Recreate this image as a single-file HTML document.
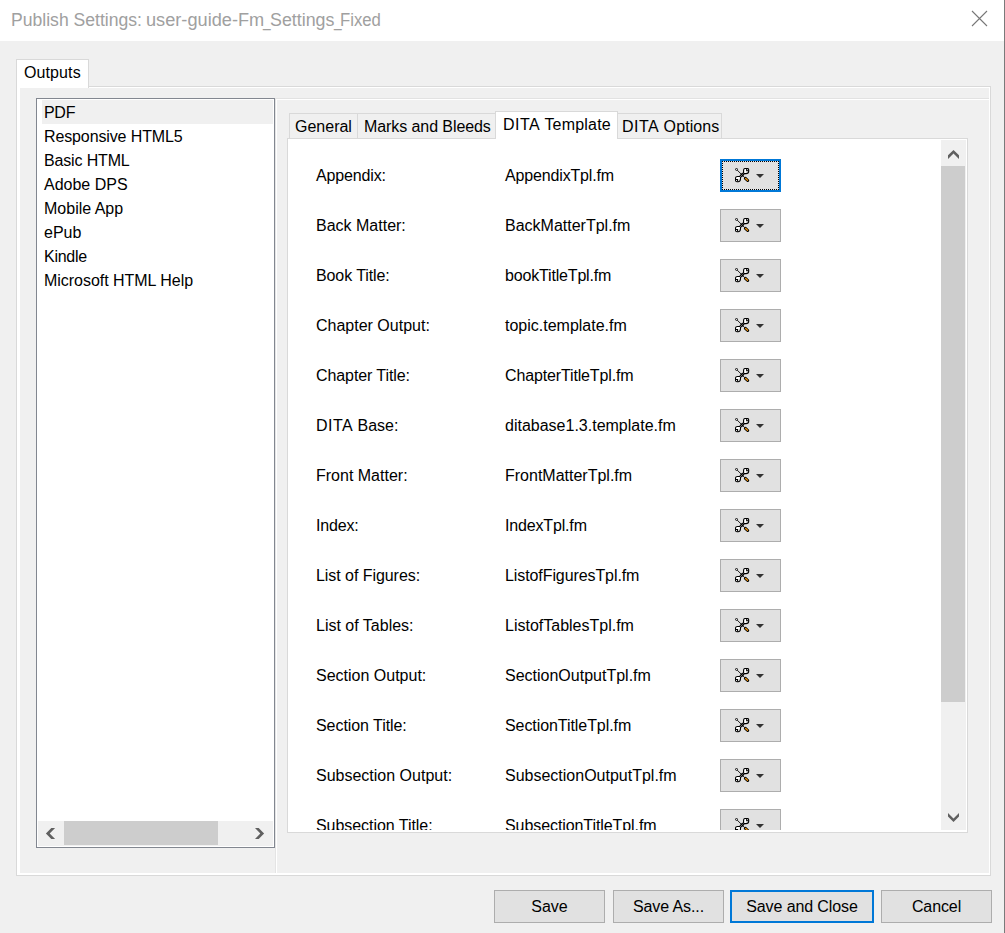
<!DOCTYPE html>
<html><head><meta charset="utf-8"><title>Publish Settings</title>
<style>
*{box-sizing:border-box;margin:0;padding:0}
html,body{width:1005px;height:933px;overflow:hidden;background:#f0f0f0}
body{position:relative;font-family:"Liberation Sans",sans-serif;font-size:16px;color:#000;line-height:18px}
.abs{position:absolute}
#titlebar{left:0;top:0;width:1005px;height:41px;background:#fff}
#title{left:0;top:9px;font-size:18px;line-height:22px;color:#a0a0a0;white-space:nowrap}
#title span{position:absolute;top:0;transform-origin:0 0;white-space:nowrap}
#edge{left:1004px;top:0;width:1px;height:933px;background:#7a7a7a}
#otab{left:16px;top:59px;width:73px;height:29px;background:#fff;border:1px solid #d9d9d9;border-bottom:none}
#otab span{position:absolute;left:7px;top:4px;letter-spacing:.1px}
#opanel{left:16px;top:86px;width:975px;height:790px;border:1px solid #d9d9d9;background:#fff}
#opanel i{position:absolute;left:3px;top:1px;right:1px;bottom:2px;background:#f0f0f0}
#list{left:36px;top:98px;width:239px;height:750px;border:1px solid #828790;background:#fff}
.li{position:absolute;left:5px;width:231px;height:24px;padding-left:2px;line-height:24px;white-space:nowrap}
.li span{position:relative;top:1px}
.li.sel{background:#f0f0f0}
#hsb{left:1px;top:722px;width:235px;height:25px;background:#f0f0f0}
#hth{left:26px;top:0;width:154px;height:24px;background:#cdcdcd}
#gv{left:275px;top:98px;width:2px;height:775px;background:#fff;border-left:1px solid #e4e4e4}
#gh{left:276px;top:98px;width:713px;height:2px;background:#fff;border-top:1px solid #e2e2e2}
.tab{top:113px;height:26px;border:1px solid #d9d9d9;border-bottom:none;background:#f0f0f0;white-space:nowrap}
.tab span{position:absolute;top:4px}
.tab.sel{top:111px;height:28px;background:#fff;z-index:3}
#pane{left:287px;top:138px;width:681px;height:695px;border:1px solid #d9d9d9;background:#fff}
#clip{left:1px;top:1px;width:652px;height:690px;overflow:hidden}
.row{position:absolute;left:0;width:652px;height:50px}
.row .l{position:absolute;left:27px;top:17px;white-space:nowrap}
.row .v{position:absolute;left:216px;top:17px;white-space:nowrap}
.tb{position:absolute;left:431px;top:9px;width:61px;height:33px;border:1px solid #adadad;background:#e1e1e1}
.tb.f{border:2px solid #0078d7}
.tb.f:after{content:"";position:absolute;left:0;top:0;right:0;bottom:0;border:1px dotted #000}
.tb .ic{position:absolute;left:14px;top:8px}
.tb .ar{position:absolute;left:34.5px;top:14px}
.tb.f .ic{left:13px;top:7px}
.tb.f .ar{left:33.5px;top:13px}
#vsb{left:653px;top:1px;width:25px;height:690px;background:#f0f0f0}
#vth{left:0;top:26px;width:24px;height:536px;background:#cdcdcd}
.btn{top:890px;height:33px;border:1px solid #adadad;background:#e1e1e1;text-align:center;line-height:31px;white-space:nowrap}
.btn.def{border:2px solid #0078d7;line-height:29px}
</style></head><body>
<div id="titlebar" class="abs"></div>
<div id="title" class="abs"><span id="t1" style="left:11px;transform:scaleX(.977)">Publish Settings: </span><span id="t1b" style="left:145.8px;transform:scaleX(1.01)">user-guide-Fm</span><span id="t2" style="left:263px;transform:scaleX(.76)">_</span><span id="t2b" style="left:269.6px;transform:scaleX(.99)">Settings</span><span id="t3" style="left:333.5px;transform:scaleX(.76)">_</span><span id="t3b" style="left:339.8px;transform:scaleX(.93)">Fixed</span></div>
<svg class="abs" style="left:971px;top:10px" width="17" height="17" viewBox="0 0 17 17"><path d="M1 1L16 16M16 1L1 16" stroke="#777" stroke-width="1.1" fill="none"/></svg>
<div id="opanel" class="abs"><i></i></div>
<div id="otab" class="abs"><span>Outputs</span></div>

<div id="list" class="abs">
<div class="li sel" style="top:1px"><span style="letter-spacing:-0.300px">PDF</span></div>
<div class="li" style="top:25px"><span style="letter-spacing:-0.120px">Responsive HTML5</span></div>
<div class="li" style="top:49px"><span style="letter-spacing:-0.156px">Basic HTML</span></div>
<div class="li" style="top:73px"><span>Adobe DPS</span></div>
<div class="li" style="top:97px"><span>Mobile App</span></div>
<div class="li" style="top:121px"><span>ePub</span></div>
<div class="li" style="top:145px"><span style="letter-spacing:-0.280px">Kindle</span></div>
<div class="li" style="top:169px"><span style="letter-spacing:-0.033px">Microsoft HTML Help</span></div>
<div id="hsb" class="abs"><div id="hth" class="abs"></div>
<svg class="abs" style="left:0;top:0" width="235" height="25" viewBox="0 0 235 25"><path d="M7.9 12.5L13.3 7H17.1L11.7 12.5L17.1 17.9H13.3Z" fill="#606060"/><path d="M226.1 12.5L220.7 7H217L222.3 12.5L217 17.9H220.7Z" fill="#606060"/></svg>
</div></div>
<div id="gv" class="abs"></div><div id="gh" class="abs"></div>

<div class="abs tab" style="left:289px;width:69px"><span style="left:5px;letter-spacing:0px">General</span></div>
<div class="abs tab" style="left:357px;width:139px"><span style="left:6px;letter-spacing:-0.08px">Marks and Bleeds</span></div>
<div class="abs tab sel" style="left:495px;width:123px"><span style="left:7px;letter-spacing:0.19px"><b style="font-weight:normal;letter-spacing:.45px">DITA</b> Template</span></div>
<div class="abs tab" style="left:617px;width:105px"><span style="left:4px;letter-spacing:0.1px"><b style="font-weight:normal;letter-spacing:.45px">DITA</b> Options</span></div>
<div id="pane" class="abs"><div id="clip" class="abs">
<div class="row" style="top:10px"><span class="l" style="letter-spacing:-0.150px">Appendix:</span><span class="v" style="letter-spacing:-0.154px">AppendixTpl.fm</span><div class="tb f"><svg class="ic" width="15" height="15" viewBox="0 0 15 15"><path d="M4.6 9.4L9.4 4.6" stroke="#000" stroke-width="2.4" fill="none"/><path d="M8.6 2.1Q8.6 .5 10.2 .5H12.3Q13.7 .5 13.7 1.9V3.3Q13.7 5.6 10.9 5.6H8.6Z" fill="#fff" stroke="#000" stroke-width="1.1"/><path d="M11.7 .6V2.7H13.6" fill="none" stroke="#000" stroke-width="1.1"/><path d="M.5 10.3Q.5 8.5 2.3 8.5H5.5V10.5Q5.5 13.7 3.1 13.7H1.9Q.5 13.7 .5 12.3Z" fill="#fff" stroke="#000" stroke-width="1.1"/><path d="M.6 11.5H2.6V13.6" fill="none" stroke="#000" stroke-width="1.1"/><path d="M2.2 2.1L9.6 9.5" stroke="#000" stroke-width=".9"/><path d="M6 5.9L8.1 8" stroke="#000" stroke-width="1.8"/><path d="M5 9L9 5" stroke="#fff" stroke-width=".7" stroke-dasharray=".9 .9" fill="none"/><circle cx="1.5" cy="1.4" r="1" fill="#fff" stroke="#000" stroke-width=".9"/><path d="M10.4 10.3L12.7 12.5" stroke="#000" stroke-width="3" stroke-linecap="round"/><path d="M10.6 10.5L12.5 12.3" stroke="#f39200" stroke-width="1.3" stroke-linecap="round"/></svg><svg class="ar" width="8" height="4" viewBox="0 0 8 4"><path d="M0 0H8L4 4Z" fill="#333"/></svg></div></div>
<div class="row" style="top:60px"><span class="l">Back Matter:</span><span class="v">BackMatterTpl.fm</span><div class="tb"><svg class="ic" width="15" height="15" viewBox="0 0 15 15"><path d="M4.6 9.4L9.4 4.6" stroke="#000" stroke-width="2.4" fill="none"/><path d="M8.6 2.1Q8.6 .5 10.2 .5H12.3Q13.7 .5 13.7 1.9V3.3Q13.7 5.6 10.9 5.6H8.6Z" fill="#fff" stroke="#000" stroke-width="1.1"/><path d="M11.7 .6V2.7H13.6" fill="none" stroke="#000" stroke-width="1.1"/><path d="M.5 10.3Q.5 8.5 2.3 8.5H5.5V10.5Q5.5 13.7 3.1 13.7H1.9Q.5 13.7 .5 12.3Z" fill="#fff" stroke="#000" stroke-width="1.1"/><path d="M.6 11.5H2.6V13.6" fill="none" stroke="#000" stroke-width="1.1"/><path d="M2.2 2.1L9.6 9.5" stroke="#000" stroke-width=".9"/><path d="M6 5.9L8.1 8" stroke="#000" stroke-width="1.8"/><path d="M5 9L9 5" stroke="#fff" stroke-width=".7" stroke-dasharray=".9 .9" fill="none"/><circle cx="1.5" cy="1.4" r="1" fill="#fff" stroke="#000" stroke-width=".9"/><path d="M10.4 10.3L12.7 12.5" stroke="#000" stroke-width="3" stroke-linecap="round"/><path d="M10.6 10.5L12.5 12.3" stroke="#f39200" stroke-width="1.3" stroke-linecap="round"/></svg><svg class="ar" width="8" height="4" viewBox="0 0 8 4"><path d="M0 0H8L4 4Z" fill="#333"/></svg></div></div>
<div class="row" style="top:110px"><span class="l" style="letter-spacing:-0.100px">Book Title:</span><span class="v" style="letter-spacing:-0.171px">bookTitleTpl.fm</span><div class="tb"><svg class="ic" width="15" height="15" viewBox="0 0 15 15"><path d="M4.6 9.4L9.4 4.6" stroke="#000" stroke-width="2.4" fill="none"/><path d="M8.6 2.1Q8.6 .5 10.2 .5H12.3Q13.7 .5 13.7 1.9V3.3Q13.7 5.6 10.9 5.6H8.6Z" fill="#fff" stroke="#000" stroke-width="1.1"/><path d="M11.7 .6V2.7H13.6" fill="none" stroke="#000" stroke-width="1.1"/><path d="M.5 10.3Q.5 8.5 2.3 8.5H5.5V10.5Q5.5 13.7 3.1 13.7H1.9Q.5 13.7 .5 12.3Z" fill="#fff" stroke="#000" stroke-width="1.1"/><path d="M.6 11.5H2.6V13.6" fill="none" stroke="#000" stroke-width="1.1"/><path d="M2.2 2.1L9.6 9.5" stroke="#000" stroke-width=".9"/><path d="M6 5.9L8.1 8" stroke="#000" stroke-width="1.8"/><path d="M5 9L9 5" stroke="#fff" stroke-width=".7" stroke-dasharray=".9 .9" fill="none"/><circle cx="1.5" cy="1.4" r="1" fill="#fff" stroke="#000" stroke-width=".9"/><path d="M10.4 10.3L12.7 12.5" stroke="#000" stroke-width="3" stroke-linecap="round"/><path d="M10.6 10.5L12.5 12.3" stroke="#f39200" stroke-width="1.3" stroke-linecap="round"/></svg><svg class="ar" width="8" height="4" viewBox="0 0 8 4"><path d="M0 0H8L4 4Z" fill="#333"/></svg></div></div>
<div class="row" style="top:160px"><span class="l">Chapter Output:</span><span class="v">topic.template.fm</span><div class="tb"><svg class="ic" width="15" height="15" viewBox="0 0 15 15"><path d="M4.6 9.4L9.4 4.6" stroke="#000" stroke-width="2.4" fill="none"/><path d="M8.6 2.1Q8.6 .5 10.2 .5H12.3Q13.7 .5 13.7 1.9V3.3Q13.7 5.6 10.9 5.6H8.6Z" fill="#fff" stroke="#000" stroke-width="1.1"/><path d="M11.7 .6V2.7H13.6" fill="none" stroke="#000" stroke-width="1.1"/><path d="M.5 10.3Q.5 8.5 2.3 8.5H5.5V10.5Q5.5 13.7 3.1 13.7H1.9Q.5 13.7 .5 12.3Z" fill="#fff" stroke="#000" stroke-width="1.1"/><path d="M.6 11.5H2.6V13.6" fill="none" stroke="#000" stroke-width="1.1"/><path d="M2.2 2.1L9.6 9.5" stroke="#000" stroke-width=".9"/><path d="M6 5.9L8.1 8" stroke="#000" stroke-width="1.8"/><path d="M5 9L9 5" stroke="#fff" stroke-width=".7" stroke-dasharray=".9 .9" fill="none"/><circle cx="1.5" cy="1.4" r="1" fill="#fff" stroke="#000" stroke-width=".9"/><path d="M10.4 10.3L12.7 12.5" stroke="#000" stroke-width="3" stroke-linecap="round"/><path d="M10.6 10.5L12.5 12.3" stroke="#f39200" stroke-width="1.3" stroke-linecap="round"/></svg><svg class="ar" width="8" height="4" viewBox="0 0 8 4"><path d="M0 0H8L4 4Z" fill="#333"/></svg></div></div>
<div class="row" style="top:210px"><span class="l" style="letter-spacing:-0.092px">Chapter Title:</span><span class="v" style="letter-spacing:-0.141px">ChapterTitleTpl.fm</span><div class="tb"><svg class="ic" width="15" height="15" viewBox="0 0 15 15"><path d="M4.6 9.4L9.4 4.6" stroke="#000" stroke-width="2.4" fill="none"/><path d="M8.6 2.1Q8.6 .5 10.2 .5H12.3Q13.7 .5 13.7 1.9V3.3Q13.7 5.6 10.9 5.6H8.6Z" fill="#fff" stroke="#000" stroke-width="1.1"/><path d="M11.7 .6V2.7H13.6" fill="none" stroke="#000" stroke-width="1.1"/><path d="M.5 10.3Q.5 8.5 2.3 8.5H5.5V10.5Q5.5 13.7 3.1 13.7H1.9Q.5 13.7 .5 12.3Z" fill="#fff" stroke="#000" stroke-width="1.1"/><path d="M.6 11.5H2.6V13.6" fill="none" stroke="#000" stroke-width="1.1"/><path d="M2.2 2.1L9.6 9.5" stroke="#000" stroke-width=".9"/><path d="M6 5.9L8.1 8" stroke="#000" stroke-width="1.8"/><path d="M5 9L9 5" stroke="#fff" stroke-width=".7" stroke-dasharray=".9 .9" fill="none"/><circle cx="1.5" cy="1.4" r="1" fill="#fff" stroke="#000" stroke-width=".9"/><path d="M10.4 10.3L12.7 12.5" stroke="#000" stroke-width="3" stroke-linecap="round"/><path d="M10.6 10.5L12.5 12.3" stroke="#f39200" stroke-width="1.3" stroke-linecap="round"/></svg><svg class="ar" width="8" height="4" viewBox="0 0 8 4"><path d="M0 0H8L4 4Z" fill="#333"/></svg></div></div>
<div class="row" style="top:260px"><span class="l"><b style="font-weight:normal;letter-spacing:.45px">DITA</b> Base:</span><span class="v">ditabase1.3.template.fm</span><div class="tb"><svg class="ic" width="15" height="15" viewBox="0 0 15 15"><path d="M4.6 9.4L9.4 4.6" stroke="#000" stroke-width="2.4" fill="none"/><path d="M8.6 2.1Q8.6 .5 10.2 .5H12.3Q13.7 .5 13.7 1.9V3.3Q13.7 5.6 10.9 5.6H8.6Z" fill="#fff" stroke="#000" stroke-width="1.1"/><path d="M11.7 .6V2.7H13.6" fill="none" stroke="#000" stroke-width="1.1"/><path d="M.5 10.3Q.5 8.5 2.3 8.5H5.5V10.5Q5.5 13.7 3.1 13.7H1.9Q.5 13.7 .5 12.3Z" fill="#fff" stroke="#000" stroke-width="1.1"/><path d="M.6 11.5H2.6V13.6" fill="none" stroke="#000" stroke-width="1.1"/><path d="M2.2 2.1L9.6 9.5" stroke="#000" stroke-width=".9"/><path d="M6 5.9L8.1 8" stroke="#000" stroke-width="1.8"/><path d="M5 9L9 5" stroke="#fff" stroke-width=".7" stroke-dasharray=".9 .9" fill="none"/><circle cx="1.5" cy="1.4" r="1" fill="#fff" stroke="#000" stroke-width=".9"/><path d="M10.4 10.3L12.7 12.5" stroke="#000" stroke-width="3" stroke-linecap="round"/><path d="M10.6 10.5L12.5 12.3" stroke="#f39200" stroke-width="1.3" stroke-linecap="round"/></svg><svg class="ar" width="8" height="4" viewBox="0 0 8 4"><path d="M0 0H8L4 4Z" fill="#333"/></svg></div></div>
<div class="row" style="top:310px"><span class="l">Front Matter:</span><span class="v">FrontMatterTpl.fm</span><div class="tb"><svg class="ic" width="15" height="15" viewBox="0 0 15 15"><path d="M4.6 9.4L9.4 4.6" stroke="#000" stroke-width="2.4" fill="none"/><path d="M8.6 2.1Q8.6 .5 10.2 .5H12.3Q13.7 .5 13.7 1.9V3.3Q13.7 5.6 10.9 5.6H8.6Z" fill="#fff" stroke="#000" stroke-width="1.1"/><path d="M11.7 .6V2.7H13.6" fill="none" stroke="#000" stroke-width="1.1"/><path d="M.5 10.3Q.5 8.5 2.3 8.5H5.5V10.5Q5.5 13.7 3.1 13.7H1.9Q.5 13.7 .5 12.3Z" fill="#fff" stroke="#000" stroke-width="1.1"/><path d="M.6 11.5H2.6V13.6" fill="none" stroke="#000" stroke-width="1.1"/><path d="M2.2 2.1L9.6 9.5" stroke="#000" stroke-width=".9"/><path d="M6 5.9L8.1 8" stroke="#000" stroke-width="1.8"/><path d="M5 9L9 5" stroke="#fff" stroke-width=".7" stroke-dasharray=".9 .9" fill="none"/><circle cx="1.5" cy="1.4" r="1" fill="#fff" stroke="#000" stroke-width=".9"/><path d="M10.4 10.3L12.7 12.5" stroke="#000" stroke-width="3" stroke-linecap="round"/><path d="M10.6 10.5L12.5 12.3" stroke="#f39200" stroke-width="1.3" stroke-linecap="round"/></svg><svg class="ar" width="8" height="4" viewBox="0 0 8 4"><path d="M0 0H8L4 4Z" fill="#333"/></svg></div></div>
<div class="row" style="top:360px"><span class="l" style="letter-spacing:-0.160px">Index:</span><span class="v" style="letter-spacing:-0.160px">IndexTpl.fm</span><div class="tb"><svg class="ic" width="15" height="15" viewBox="0 0 15 15"><path d="M4.6 9.4L9.4 4.6" stroke="#000" stroke-width="2.4" fill="none"/><path d="M8.6 2.1Q8.6 .5 10.2 .5H12.3Q13.7 .5 13.7 1.9V3.3Q13.7 5.6 10.9 5.6H8.6Z" fill="#fff" stroke="#000" stroke-width="1.1"/><path d="M11.7 .6V2.7H13.6" fill="none" stroke="#000" stroke-width="1.1"/><path d="M.5 10.3Q.5 8.5 2.3 8.5H5.5V10.5Q5.5 13.7 3.1 13.7H1.9Q.5 13.7 .5 12.3Z" fill="#fff" stroke="#000" stroke-width="1.1"/><path d="M.6 11.5H2.6V13.6" fill="none" stroke="#000" stroke-width="1.1"/><path d="M2.2 2.1L9.6 9.5" stroke="#000" stroke-width=".9"/><path d="M6 5.9L8.1 8" stroke="#000" stroke-width="1.8"/><path d="M5 9L9 5" stroke="#fff" stroke-width=".7" stroke-dasharray=".9 .9" fill="none"/><circle cx="1.5" cy="1.4" r="1" fill="#fff" stroke="#000" stroke-width=".9"/><path d="M10.4 10.3L12.7 12.5" stroke="#000" stroke-width="3" stroke-linecap="round"/><path d="M10.6 10.5L12.5 12.3" stroke="#f39200" stroke-width="1.3" stroke-linecap="round"/></svg><svg class="ar" width="8" height="4" viewBox="0 0 8 4"><path d="M0 0H8L4 4Z" fill="#333"/></svg></div></div>
<div class="row" style="top:410px"><span class="l" style="letter-spacing:-0.053px">List of Figures:</span><span class="v" style="letter-spacing:-0.089px">ListofFiguresTpl.fm</span><div class="tb"><svg class="ic" width="15" height="15" viewBox="0 0 15 15"><path d="M4.6 9.4L9.4 4.6" stroke="#000" stroke-width="2.4" fill="none"/><path d="M8.6 2.1Q8.6 .5 10.2 .5H12.3Q13.7 .5 13.7 1.9V3.3Q13.7 5.6 10.9 5.6H8.6Z" fill="#fff" stroke="#000" stroke-width="1.1"/><path d="M11.7 .6V2.7H13.6" fill="none" stroke="#000" stroke-width="1.1"/><path d="M.5 10.3Q.5 8.5 2.3 8.5H5.5V10.5Q5.5 13.7 3.1 13.7H1.9Q.5 13.7 .5 12.3Z" fill="#fff" stroke="#000" stroke-width="1.1"/><path d="M.6 11.5H2.6V13.6" fill="none" stroke="#000" stroke-width="1.1"/><path d="M2.2 2.1L9.6 9.5" stroke="#000" stroke-width=".9"/><path d="M6 5.9L8.1 8" stroke="#000" stroke-width="1.8"/><path d="M5 9L9 5" stroke="#fff" stroke-width=".7" stroke-dasharray=".9 .9" fill="none"/><circle cx="1.5" cy="1.4" r="1" fill="#fff" stroke="#000" stroke-width=".9"/><path d="M10.4 10.3L12.7 12.5" stroke="#000" stroke-width="3" stroke-linecap="round"/><path d="M10.6 10.5L12.5 12.3" stroke="#f39200" stroke-width="1.3" stroke-linecap="round"/></svg><svg class="ar" width="8" height="4" viewBox="0 0 8 4"><path d="M0 0H8L4 4Z" fill="#333"/></svg></div></div>
<div class="row" style="top:460px"><span class="l">List of Tables:</span><span class="v">ListofTablesTpl.fm</span><div class="tb"><svg class="ic" width="15" height="15" viewBox="0 0 15 15"><path d="M4.6 9.4L9.4 4.6" stroke="#000" stroke-width="2.4" fill="none"/><path d="M8.6 2.1Q8.6 .5 10.2 .5H12.3Q13.7 .5 13.7 1.9V3.3Q13.7 5.6 10.9 5.6H8.6Z" fill="#fff" stroke="#000" stroke-width="1.1"/><path d="M11.7 .6V2.7H13.6" fill="none" stroke="#000" stroke-width="1.1"/><path d="M.5 10.3Q.5 8.5 2.3 8.5H5.5V10.5Q5.5 13.7 3.1 13.7H1.9Q.5 13.7 .5 12.3Z" fill="#fff" stroke="#000" stroke-width="1.1"/><path d="M.6 11.5H2.6V13.6" fill="none" stroke="#000" stroke-width="1.1"/><path d="M2.2 2.1L9.6 9.5" stroke="#000" stroke-width=".9"/><path d="M6 5.9L8.1 8" stroke="#000" stroke-width="1.8"/><path d="M5 9L9 5" stroke="#fff" stroke-width=".7" stroke-dasharray=".9 .9" fill="none"/><circle cx="1.5" cy="1.4" r="1" fill="#fff" stroke="#000" stroke-width=".9"/><path d="M10.4 10.3L12.7 12.5" stroke="#000" stroke-width="3" stroke-linecap="round"/><path d="M10.6 10.5L12.5 12.3" stroke="#f39200" stroke-width="1.3" stroke-linecap="round"/></svg><svg class="ar" width="8" height="4" viewBox="0 0 8 4"><path d="M0 0H8L4 4Z" fill="#333"/></svg></div></div>
<div class="row" style="top:510px"><span class="l">Section Output:</span><span class="v">SectionOutputTpl.fm</span><div class="tb"><svg class="ic" width="15" height="15" viewBox="0 0 15 15"><path d="M4.6 9.4L9.4 4.6" stroke="#000" stroke-width="2.4" fill="none"/><path d="M8.6 2.1Q8.6 .5 10.2 .5H12.3Q13.7 .5 13.7 1.9V3.3Q13.7 5.6 10.9 5.6H8.6Z" fill="#fff" stroke="#000" stroke-width="1.1"/><path d="M11.7 .6V2.7H13.6" fill="none" stroke="#000" stroke-width="1.1"/><path d="M.5 10.3Q.5 8.5 2.3 8.5H5.5V10.5Q5.5 13.7 3.1 13.7H1.9Q.5 13.7 .5 12.3Z" fill="#fff" stroke="#000" stroke-width="1.1"/><path d="M.6 11.5H2.6V13.6" fill="none" stroke="#000" stroke-width="1.1"/><path d="M2.2 2.1L9.6 9.5" stroke="#000" stroke-width=".9"/><path d="M6 5.9L8.1 8" stroke="#000" stroke-width="1.8"/><path d="M5 9L9 5" stroke="#fff" stroke-width=".7" stroke-dasharray=".9 .9" fill="none"/><circle cx="1.5" cy="1.4" r="1" fill="#fff" stroke="#000" stroke-width=".9"/><path d="M10.4 10.3L12.7 12.5" stroke="#000" stroke-width="3" stroke-linecap="round"/><path d="M10.6 10.5L12.5 12.3" stroke="#f39200" stroke-width="1.3" stroke-linecap="round"/></svg><svg class="ar" width="8" height="4" viewBox="0 0 8 4"><path d="M0 0H8L4 4Z" fill="#333"/></svg></div></div>
<div class="row" style="top:560px"><span class="l" style="letter-spacing:-0.062px">Section Title:</span><span class="v" style="letter-spacing:-0.071px">SectionTitleTpl.fm</span><div class="tb"><svg class="ic" width="15" height="15" viewBox="0 0 15 15"><path d="M4.6 9.4L9.4 4.6" stroke="#000" stroke-width="2.4" fill="none"/><path d="M8.6 2.1Q8.6 .5 10.2 .5H12.3Q13.7 .5 13.7 1.9V3.3Q13.7 5.6 10.9 5.6H8.6Z" fill="#fff" stroke="#000" stroke-width="1.1"/><path d="M11.7 .6V2.7H13.6" fill="none" stroke="#000" stroke-width="1.1"/><path d="M.5 10.3Q.5 8.5 2.3 8.5H5.5V10.5Q5.5 13.7 3.1 13.7H1.9Q.5 13.7 .5 12.3Z" fill="#fff" stroke="#000" stroke-width="1.1"/><path d="M.6 11.5H2.6V13.6" fill="none" stroke="#000" stroke-width="1.1"/><path d="M2.2 2.1L9.6 9.5" stroke="#000" stroke-width=".9"/><path d="M6 5.9L8.1 8" stroke="#000" stroke-width="1.8"/><path d="M5 9L9 5" stroke="#fff" stroke-width=".7" stroke-dasharray=".9 .9" fill="none"/><circle cx="1.5" cy="1.4" r="1" fill="#fff" stroke="#000" stroke-width=".9"/><path d="M10.4 10.3L12.7 12.5" stroke="#000" stroke-width="3" stroke-linecap="round"/><path d="M10.6 10.5L12.5 12.3" stroke="#f39200" stroke-width="1.3" stroke-linecap="round"/></svg><svg class="ar" width="8" height="4" viewBox="0 0 8 4"><path d="M0 0H8L4 4Z" fill="#333"/></svg></div></div>
<div class="row" style="top:610px"><span class="l">Subsection Output:</span><span class="v">SubsectionOutputTpl.fm</span><div class="tb"><svg class="ic" width="15" height="15" viewBox="0 0 15 15"><path d="M4.6 9.4L9.4 4.6" stroke="#000" stroke-width="2.4" fill="none"/><path d="M8.6 2.1Q8.6 .5 10.2 .5H12.3Q13.7 .5 13.7 1.9V3.3Q13.7 5.6 10.9 5.6H8.6Z" fill="#fff" stroke="#000" stroke-width="1.1"/><path d="M11.7 .6V2.7H13.6" fill="none" stroke="#000" stroke-width="1.1"/><path d="M.5 10.3Q.5 8.5 2.3 8.5H5.5V10.5Q5.5 13.7 3.1 13.7H1.9Q.5 13.7 .5 12.3Z" fill="#fff" stroke="#000" stroke-width="1.1"/><path d="M.6 11.5H2.6V13.6" fill="none" stroke="#000" stroke-width="1.1"/><path d="M2.2 2.1L9.6 9.5" stroke="#000" stroke-width=".9"/><path d="M6 5.9L8.1 8" stroke="#000" stroke-width="1.8"/><path d="M5 9L9 5" stroke="#fff" stroke-width=".7" stroke-dasharray=".9 .9" fill="none"/><circle cx="1.5" cy="1.4" r="1" fill="#fff" stroke="#000" stroke-width=".9"/><path d="M10.4 10.3L12.7 12.5" stroke="#000" stroke-width="3" stroke-linecap="round"/><path d="M10.6 10.5L12.5 12.3" stroke="#f39200" stroke-width="1.3" stroke-linecap="round"/></svg><svg class="ar" width="8" height="4" viewBox="0 0 8 4"><path d="M0 0H8L4 4Z" fill="#333"/></svg></div></div>
<div class="row" style="top:660px"><span class="l" style="letter-spacing:-0.050px">Subsection Title:</span><span class="v" style="letter-spacing:-0.080px">SubsectionTitleTpl.fm</span><div class="tb"><svg class="ic" width="15" height="15" viewBox="0 0 15 15"><path d="M4.6 9.4L9.4 4.6" stroke="#000" stroke-width="2.4" fill="none"/><path d="M8.6 2.1Q8.6 .5 10.2 .5H12.3Q13.7 .5 13.7 1.9V3.3Q13.7 5.6 10.9 5.6H8.6Z" fill="#fff" stroke="#000" stroke-width="1.1"/><path d="M11.7 .6V2.7H13.6" fill="none" stroke="#000" stroke-width="1.1"/><path d="M.5 10.3Q.5 8.5 2.3 8.5H5.5V10.5Q5.5 13.7 3.1 13.7H1.9Q.5 13.7 .5 12.3Z" fill="#fff" stroke="#000" stroke-width="1.1"/><path d="M.6 11.5H2.6V13.6" fill="none" stroke="#000" stroke-width="1.1"/><path d="M2.2 2.1L9.6 9.5" stroke="#000" stroke-width=".9"/><path d="M6 5.9L8.1 8" stroke="#000" stroke-width="1.8"/><path d="M5 9L9 5" stroke="#fff" stroke-width=".7" stroke-dasharray=".9 .9" fill="none"/><circle cx="1.5" cy="1.4" r="1" fill="#fff" stroke="#000" stroke-width=".9"/><path d="M10.4 10.3L12.7 12.5" stroke="#000" stroke-width="3" stroke-linecap="round"/><path d="M10.6 10.5L12.5 12.3" stroke="#f39200" stroke-width="1.3" stroke-linecap="round"/></svg><svg class="ar" width="8" height="4" viewBox="0 0 8 4"><path d="M0 0H8L4 4Z" fill="#333"/></svg></div></div>
</div><div id="vsb" class="abs"><div id="vth" class="abs"></div>
<svg class="abs" style="left:0;top:0" width="25" height="690" viewBox="0 0 25 690"><path d="M12.5 9.9L18 15.3V19L12.5 13.5L7 19V15.3Z" fill="#606060"/><path d="M12.5 682L18 676.6V672.9L12.5 678.4L7 672.9V676.6Z" fill="#606060"/></svg>
</div></div>

<div class="abs btn" style="left:494px;width:111px;letter-spacing:0px">Save</div>
<div class="abs btn" style="left:613px;width:111px;letter-spacing:-0.1px">Save As...</div>
<div class="abs btn def" style="left:730px;width:144px;letter-spacing:-0.1px">Save and Close</div>
<div class="abs btn" style="left:881px;width:111px;letter-spacing:-0.1px">Cancel</div>
<div id="edge" class="abs"></div>
</body></html>
